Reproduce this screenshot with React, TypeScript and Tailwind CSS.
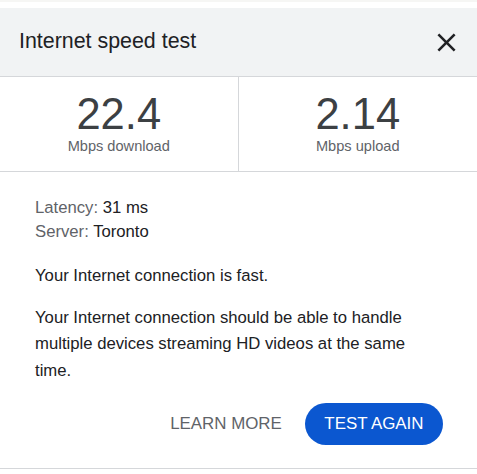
import React from 'react';

const stats = [
  { value: '22.4', label: 'Mbps download' },
  { value: '2.14', label: 'Mbps upload' },
];

const App: React.FC = () => {
  return (
    <div
      className="w-[477px] h-[474px] bg-white overflow-hidden flex flex-col"
      style={{ fontFamily: '"Liberation Sans", Arial, sans-serif' }}
    >
      <div className="h-[2px] bg-[#f6f6f4]"></div>
      <div className="h-[6px] bg-white"></div>

      {/* Header */}
      <div className="h-[69px] bg-[#f1f3f4] border-b border-[#d5d7da] flex items-center justify-between pl-[19px] pr-[15px]">
        <h1 className="text-[21.4px] text-[#202124] leading-none">Internet speed test</h1>
        <button aria-label="Close" className="w-[31px] h-[31px] flex items-center justify-center text-[#202124]">
          <svg width="31" height="31" viewBox="0 0 24 24" fill="currentColor">
            <path d="M19 6.41L17.59 5 12 10.59 6.41 5 5 6.41 10.59 12 5 17.59 6.41 19 12 13.41 17.59 19 19 17.59 13.41 12z" />
          </svg>
        </button>
      </div>

      {/* Stats */}
      <div className="grid grid-cols-2 h-[95px] border-b border-[#d5d7da]">
        {stats.map((s, i) => (
          <div
            key={s.label}
            className={`flex flex-col items-center pt-[14px] ${i === 0 ? 'border-r border-[#d5d7da]' : ''}`}
          >
            <div className="text-[43.5px] leading-[46px] text-[#3c4043]">{s.value}</div>
            <div className="text-[14.6px] leading-[18px] text-[#5f6368]">{s.label}</div>
          </div>
        ))}
      </div>

      {/* Body */}
      <div className="flex-1 flex flex-col px-[35px] pt-[24px] text-[16.7px] text-[#202124]">
        <div className="leading-[24px]">
          <span className="text-[#5f6368]">Latency: </span>31 ms
        </div>
        <div className="leading-[24px]">
          <span className="text-[#5f6368]">Server: </span>Toronto
        </div>
        <p className="mt-[19px] leading-[26.5px]">Your Internet connection is fast.</p>
        <p className="mt-[15px] leading-[26.5px]">
          Your Internet connection should be able to handle multiple devices streaming HD videos at the same time.
        </p>
        <div className="mt-[19px] flex items-center justify-end gap-[7px] -mr-[1px]">
          <button className="h-[42px] px-[16px] text-[16.9px] text-[#5f6368] uppercase">Learn more</button>
          <button className="h-[42px] px-[19.5px] rounded-full bg-[#0b57d0] text-white text-[16.9px] uppercase">
            Test again
          </button>
        </div>
      </div>

      <div className="h-[1px] bg-[#d5d7da]"></div>
      <div className="h-[5px] bg-white"></div>
    </div>
  );
};

export default App;
